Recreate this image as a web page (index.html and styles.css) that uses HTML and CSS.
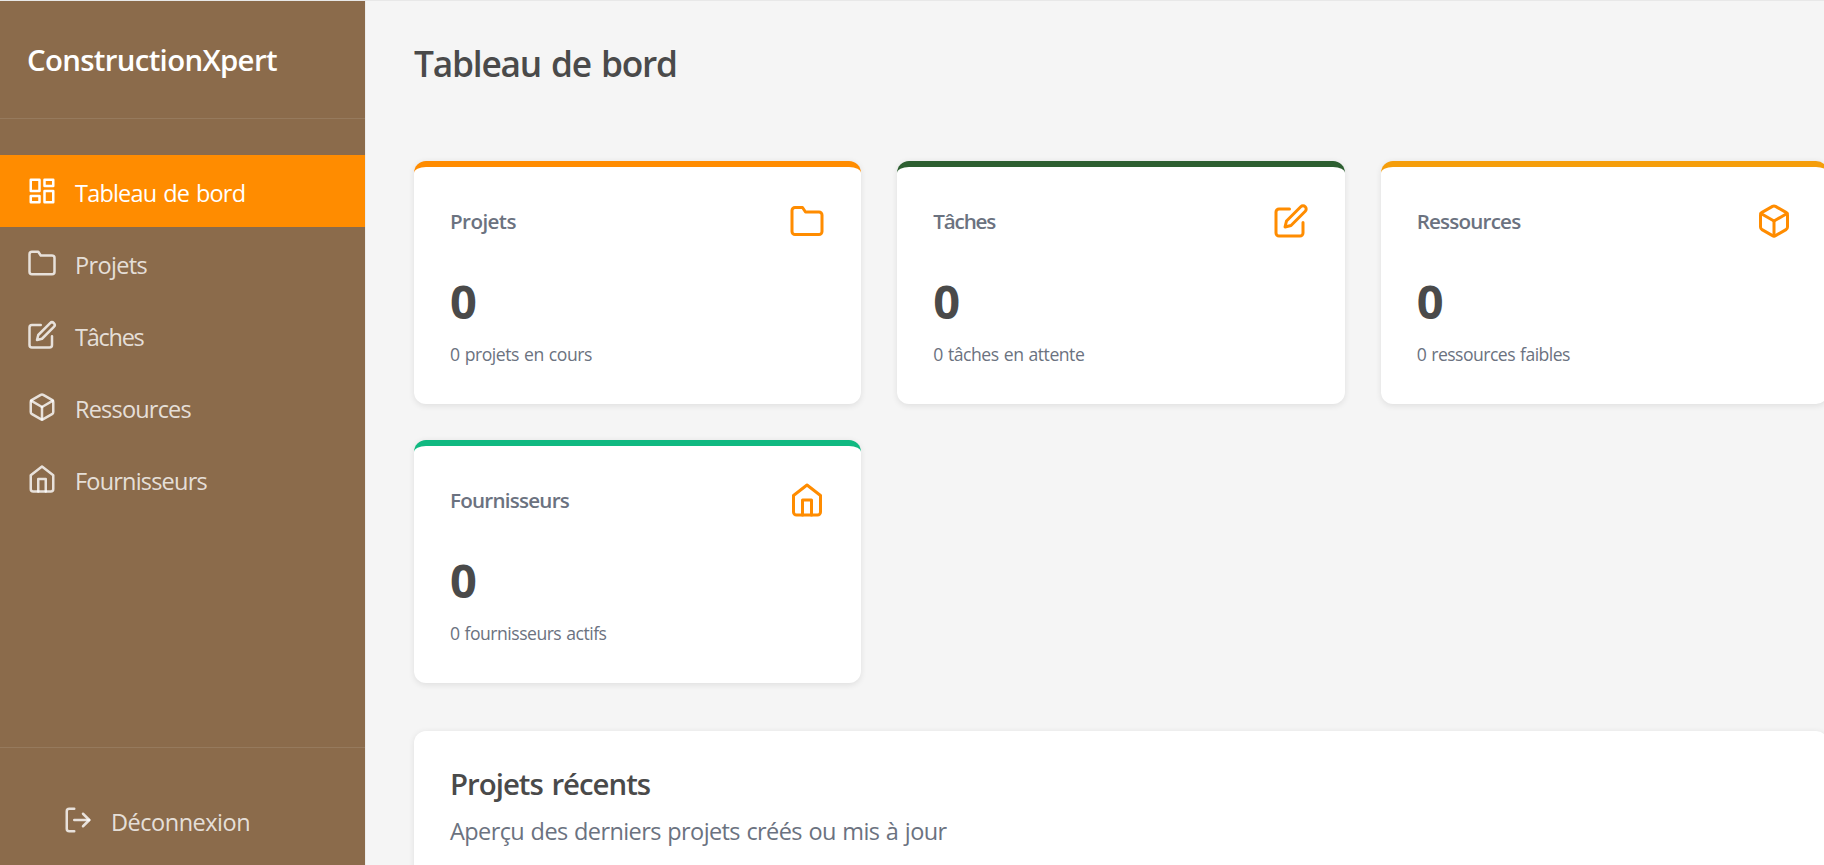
FILE: index.html
```html
<!DOCTYPE html>
<html lang="fr">
<head>
<meta charset="utf-8">
<title>ConstructionXpert</title>
<link rel="stylesheet" href="styles.css">
</head>
<body>
<svg class="sprite" aria-hidden="true">
  <symbol id="i-dash" viewBox="0 0 24 24"><rect x="3" y="3" width="7" height="9"/><rect x="14" y="3" width="7" height="5"/><rect x="14" y="12" width="7" height="9"/><rect x="3" y="16" width="7" height="5"/></symbol>
  <symbol id="i-folder" viewBox="0 0 24 24"><path d="M22 19a2 2 0 0 1-2 2H4a2 2 0 0 1-2-2V5a2 2 0 0 1 2-2h5l2 3h9a2 2 0 0 1 2 2z"/></symbol>
  <symbol id="i-edit" viewBox="0 0 24 24"><path d="M11 4H4a2 2 0 0 0-2 2v14a2 2 0 0 0 2 2h14a2 2 0 0 0 2-2v-7"/><path d="M18.5 2.5a2.121 2.121 0 0 1 3 3L12 15l-4 1 1-4 9.5-9.5z"/></symbol>
  <symbol id="i-box" viewBox="0 0 24 24"><path d="M21 16V8a2 2 0 0 0-1-1.73l-7-4a2 2 0 0 0-2 0l-7 4A2 2 0 0 0 3 8v8a2 2 0 0 0 1 1.73l7 4a2 2 0 0 0 2 0l7-4A2 2 0 0 0 21 16z"/><polyline points="3.27 6.96 12 12.01 20.73 6.96"/><line x1="12" y1="22.08" x2="12" y2="12"/></symbol>
  <symbol id="i-home" viewBox="0 0 24 24"><path d="M3 9l9-7 9 7v11a2 2 0 0 1-2 2H5a2 2 0 0 1-2-2z"/><polyline points="9 22 9 12 15 12 15 22"/></symbol>
  <symbol id="i-logout" viewBox="0 0 24 24"><path d="M9 21H5a2 2 0 0 1-2-2V5a2 2 0 0 1 2-2h4"/><polyline points="16 17 21 12 16 7"/><line x1="21" y1="12" x2="9" y2="12"/></symbol>
</svg>
<div class="app">
  <aside class="sidebar">
    <header class="brand"><span class="brand-name">ConstructionXpert</span></header>
    <nav class="nav">
      <a class="nav-item active"><svg class="icon"><use href="#i-dash"/></svg><span class="label t-dash">Tableau de bord</span></a>
      <a class="nav-item"><svg class="icon"><use href="#i-folder"/></svg><span class="label t-projects">Projets</span></a>
      <a class="nav-item"><svg class="icon"><use href="#i-edit"/></svg><span class="label t-tasks">Tâches</span></a>
      <a class="nav-item"><svg class="icon"><use href="#i-box"/></svg><span class="label t-resources">Ressources</span></a>
      <a class="nav-item"><svg class="icon"><use href="#i-home"/></svg><span class="label t-suppliers">Fournisseurs</span></a>
    </nav>
    <footer class="sidebar-footer">
      <a class="nav-item"><svg class="icon"><use href="#i-logout"/></svg><span class="label t-logout">Déconnexion</span></a>
    </footer>
  </aside>
  <main class="main">
    <h1 class="page-title">Tableau de bord</h1>
    <section class="stats">
      <article class="card stat projects">
        <div class="stat-head"><h2 class="stat-title">Projets</h2><svg class="icon"><use href="#i-folder"/></svg></div>
        <div class="value">0</div><p class="note">0 projets en cours</p>
      </article>
      <article class="card stat tasks">
        <div class="stat-head"><h2 class="stat-title">Tâches</h2><svg class="icon"><use href="#i-edit"/></svg></div>
        <div class="value">0</div><p class="note">0 tâches en attente</p>
      </article>
      <article class="card stat resources">
        <div class="stat-head"><h2 class="stat-title">Ressources</h2><svg class="icon"><use href="#i-box"/></svg></div>
        <div class="value">0</div><p class="note">0 ressources faibles</p>
      </article>
      <article class="card stat suppliers">
        <div class="stat-head"><h2 class="stat-title">Fournisseurs</h2><svg class="icon"><use href="#i-home"/></svg></div>
        <div class="value">0</div><p class="note">0 fournisseurs actifs</p>
      </article>
    </section>
    <section class="card recent">
      <h2 class="recent-title">Projets récents</h2>
      <p class="recent-sub">Aperçu des derniers projets créés ou mis à jour</p>
    </section>
  </main>
</div>
</body>
</html>
```
FILE: styles.css
```css
* { box-sizing: border-box; margin: 0; padding: 0; }

body {
  background: #f5f5f5;
  color: #4a4a4a;
  font-family: "Open Sans", "Noto Sans", sans-serif;
  white-space: nowrap;
}

.sprite { display: none; }

.icon {
  flex: none;
  width: 30px;
  height: 30px;
  fill: none;
  stroke: currentColor;
  stroke-width: 2;
  stroke-linecap: round;
  stroke-linejoin: round;
}

.app {
  display: flex;
  align-items: flex-start;
  height: 865px;
  overflow: hidden;
  border-top: 1px solid #e8e8e8;
}

/* Sidebar */
.sidebar {
  display: flex;
  flex-direction: column;
  flex: none;
  width: 365px;
  height: 864px;
  background: #8b6b4b;
  color: rgba(255, 255, 255, .8);
  box-shadow: 1px 0 0 #ececec;
}
.brand {
  display: flex;
  align-items: center;
  height: 118px;
  padding: 0 27px;
  border-bottom: 1px solid rgba(255, 255, 255, .1);
}
.brand-name {
  padding-top: 1px;
  color: #fff;
  font-size: 29.4px;
  font-weight: 600;
  letter-spacing: -.68px;
}
.nav { flex: 1; padding-top: 36px; }
.nav-item {
  display: flex;
  align-items: center;
  gap: 18px;
  height: 72px;
  padding: 0 27px;
}
.nav-item.active { background: #ff8c00; color: #fff; }
.label { padding-top: 3px; font-size: 23.5px; }
.t-dash { letter-spacing: -.8px; word-spacing: 1.5px; }
.t-projects { letter-spacing: -.65px; }
.t-tasks { letter-spacing: -1.25px; }
.t-resources { letter-spacing: -.8px; }
.t-suppliers { letter-spacing: -.8px; }
.t-logout { letter-spacing: -.48px; }
.sidebar-footer {
  height: 118px;
  padding: 36px 36px 0;
  border-top: 1px solid rgba(255, 255, 255, .1);
}

/* Content */
.main {
  flex: none;
  width: 1511px;
  padding: 35px 48px 0 49px;
}
.page-title {
  margin-bottom: 71px;
  font-size: 35.3px;
  font-weight: 600;
  line-height: 54px;
  letter-spacing: -1.2px;
  word-spacing: 2px;
}
.card {
  background: #fff;
  border-radius: 12px;
  box-shadow: 0 1.5px 6px rgba(0, 0, 0, .09);
}
.stats {
  display: grid;
  grid-template-columns: repeat(3, 1fr);
  gap: 36px;
}
.stat {
  height: 243px;
  padding: 36px;
  border-top: 6px solid #ff8c00;
}
.stat.tasks { border-top-color: #2d5f31; }
.stat.resources { border-top-color: #f59e0b; }
.stat.suppliers { border-top-color: #10b981; }
.stat-head {
  display: flex;
  align-items: center;
  justify-content: space-between;
  height: 36px;
  margin-bottom: 24px;
}
.stat-head .icon { width: 36px; height: 36px; color: #ff8c00; }
.stat-title {
  color: #6b7280;
  font-size: 20.6px;
  font-weight: 600;
  letter-spacing: -.58px;
}
.tasks .stat-title { letter-spacing: -1.15px; }
.resources .stat-title { letter-spacing: -.8px; }
.suppliers .stat-title { letter-spacing: -.77px; }
.value {
  margin-bottom: 1px;
  font-size: 47px;
  font-weight: 700;
  line-height: 77px;
}
.note {
  color: #6b7280;
  font-size: 17.6px;
  line-height: 27px;
  letter-spacing: -.47px;
  word-spacing: 1px;
}
.tasks .note { letter-spacing: -.48px; }
.resources .note { letter-spacing: -.53px; }
.suppliers .note { letter-spacing: -.51px; }
.recent {
  height: 300px;
  margin-top: 48px;
  padding: 37px 36px;
}
.recent-title {
  margin-bottom: 12px;
  font-size: 29.4px;
  font-weight: 600;
  line-height: 33px;
  letter-spacing: -1px;
  word-spacing: 2px;
}
.recent-sub {
  color: #6b7280;
  font-size: 23.5px;
  line-height: 36px;
  letter-spacing: -.6px;
  word-spacing: 1px;
}
```
